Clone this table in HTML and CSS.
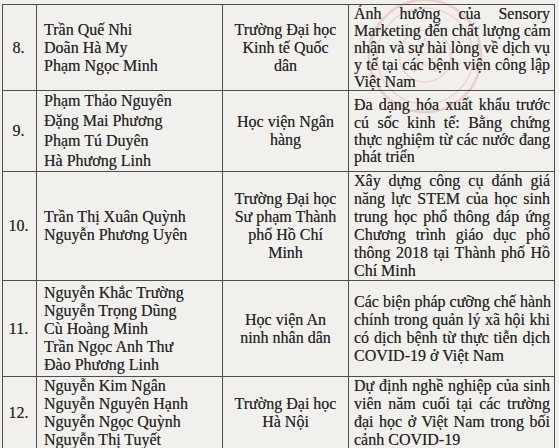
FILE: index.html
```html
<!DOCTYPE html>
<html lang="vi">
<head>
<meta charset="utf-8">
<title>Danh sách</title>
<link rel="stylesheet" href="styles.css">
</head>
<body>
<div class="page">
  <table class="list">
    <colgroup>
      <col class="c-no">
      <col class="c-names">
      <col class="c-school">
      <col class="c-topic">
    </colgroup>
    <tr class="r8">
      <td class="no">8.</td>
      <td class="names">Trần Quế Nhi<br>Doãn Hà My<br>Phạm Ngọc Minh</td>
      <td class="school">Trường Đại học<br>Kinh tế Quốc<br>dân</td>
      <td class="topic">
        <div class="ln">Ảnh hưởng của Sensory</div>
        <div class="ln">Marketing đến chất lượng cảm</div>
        <div class="ln">nhận và sự hài lòng về dịch vụ</div>
        <div class="ln">y tế tại các bệnh viện công lập</div>
        <div class="ln last">Việt Nam</div>
      </td>
    </tr>
    <tr class="r9">
      <td class="no">9.</td>
      <td class="names">Phạm Thảo Nguyên<br>Đặng Mai Phương<br>Phạm Tú Duyên<br>Hà Phương Linh</td>
      <td class="school">Học viện Ngân<br>hàng</td>
      <td class="topic">
        <div class="ln">Đa dạng hóa xuất khẩu trước</div>
        <div class="ln">cú sốc kinh tế: Bằng chứng</div>
        <div class="ln">thực nghiệm từ các nước đang</div>
        <div class="ln last">phát triển</div>
      </td>
    </tr>
    <tr class="r10">
      <td class="no">10.</td>
      <td class="names">Trần Thị Xuân Quỳnh<br>Nguyễn Phương Uyên</td>
      <td class="school">Trường Đại học<br>Sư phạm Thành<br>phố Hồ Chí<br>Minh</td>
      <td class="topic">
        <div class="ln">Xây dựng công cụ đánh giá</div>
        <div class="ln">năng lực STEM của học sinh</div>
        <div class="ln">trung học phổ thông đáp ứng</div>
        <div class="ln">Chương trình giáo dục phổ</div>
        <div class="ln">thông 2018 tại Thành phố Hồ</div>
        <div class="ln last">Chí Minh</div>
      </td>
    </tr>
    <tr class="r11">
      <td class="no">11.</td>
      <td class="names">Nguyễn Khắc Trường<br>Nguyễn Trọng Dũng<br>Cù Hoàng Minh<br>Trần Ngọc Anh Thư<br>Đào Phương Linh</td>
      <td class="school">Học viện An<br>ninh nhân dân</td>
      <td class="topic">
        <div class="ln">Các biện pháp cưỡng chế hành</div>
        <div class="ln">chính trong quản lý xã hội khi</div>
        <div class="ln">có dịch bệnh từ thực tiễn dịch</div>
        <div class="ln last">COVID-19 ở Việt Nam</div>
      </td>
    </tr>
    <tr class="r12">
      <td class="no">12.</td>
      <td class="names">Nguyễn Kim Ngân<br>Nguyễn Nguyên Hạnh<br>Nguyễn Ngọc Quỳnh<br>Nguyễn Thị Tuyết</td>
      <td class="school">Trường Đại học<br>Hà Nội</td>
      <td class="topic">
        <div class="ln">Dự định nghề nghiệp của sinh</div>
        <div class="ln">viên năm cuối tại các trường</div>
        <div class="ln">đại học ở Việt Nam trong bối</div>
        <div class="ln last">cảnh COVID-19</div>
      </td>
    </tr>
  </table>

  <svg class="stamp" width="120" height="120" viewBox="0 0 120 120" aria-hidden="true">
    <circle cx="60" cy="60" r="56" fill="none" stroke="#d9453f" stroke-width="2.5"/>
    <circle cx="60" cy="60" r="48" fill="none" stroke="#d9453f" stroke-width="1.2"/>
    <circle cx="60" cy="60" r="26" fill="none" stroke="#d9453f" stroke-width="1.2"/>
    <path d="M60 42 L64 55 L78 55 L67 63 L71 76 L60 68 L49 76 L53 63 L42 55 L56 55 Z" fill="none" stroke="#d9453f" stroke-width="1"/>
  </svg>
</div>
</body>
</html>
```

FILE: styles.css
```css
html, body {
  margin: 0;
  padding: 0;
  background: #f1f0ed;
}

.page {
  position: relative;
  width: 559px;
  height: 448px;
  overflow: hidden;
  padding: 4px 0 0 2px;
  box-sizing: border-box;
  font-family: "Liberation Serif", "Times New Roman", serif;
  font-size: 16px;
  color: #262626;
  text-shadow: 0 0 0.5px rgba(30, 30, 30, 0.6);
}

.list {
  border-collapse: collapse;
  table-layout: fixed;
  width: 552px;
  position: relative;
  z-index: 1;
}

.c-no { width: 34px; }
.c-names { width: 186px; }
.c-school { width: 126px; }
.c-topic { width: 206px; }

.list td {
  border: 1px solid #4d4d4d;
  vertical-align: middle;
  line-height: 18px;
  padding: 0;
  overflow: hidden;
}

.no {
  text-align: center;
  padding-right: 2px !important;
}

.names {
  padding-left: 7px !important;
  white-space: nowrap;
}

.school {
  text-align: center;
  white-space: nowrap;
}

.topic {
  padding: 0 4px 0 5px !important;
}

.ln {
  text-align: justify;
  text-align-last: justify;
  white-space: nowrap;
}

.ln.last {
  text-align-last: left;
}

.r8 td { height: 85px; }
.r8 .topic { line-height: 17px; }
.r9 td { height: 79px; }
.r9 .names { line-height: 20px; }
.r9 .topic { line-height: 17.4px; }
.r10 td { height: 108px; }
.r11 td { height: 95px; }
.r12 td { height: 71px; }

.stamp {
  position: absolute;
  left: 365px;
  top: -4px;
  opacity: 0.2;
  z-index: 0;
}
```
